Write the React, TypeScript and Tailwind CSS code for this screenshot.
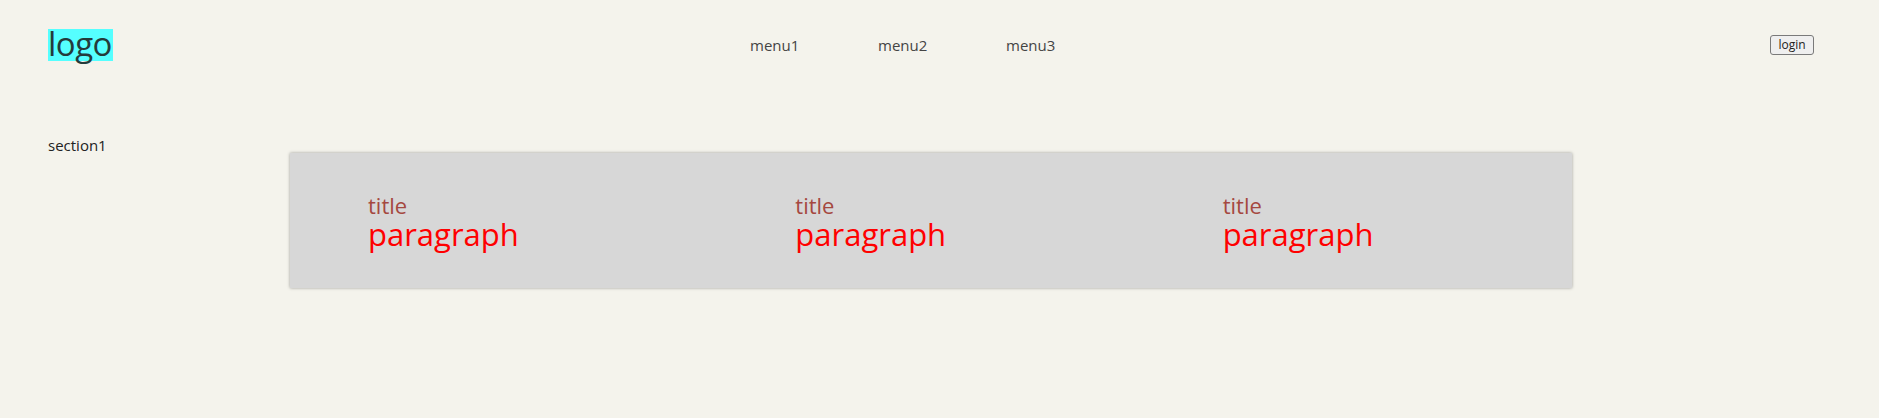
import React from 'react';

const menus = ['menu1', 'menu2', 'menu3'];

const cards = [
  { title: 'title', body: 'paragraph' },
  { title: 'title', body: 'paragraph' },
  { title: 'title', body: 'paragraph' },
];

const App: React.FC = () => {
  return (
    <main className="min-h-screen bg-[#f4f3ec] font-['Open_Sans','Noto_Sans',sans-serif] text-[#333]">
      <header className="flex items-center pt-[29px] pl-[48px] pr-[65px]">
        <div className="h-[32px] w-[65px] bg-[#55ffff] text-[33px] leading-[30px] text-[#243b3b] tracking-[-0.5px]">
          logo
        </div>
        <nav className="ml-[637px] flex">
          {menus.map((m) => (
            <a key={m} className="w-[128px] text-[15px] leading-[20px] text-[#444]">
              {m}
            </a>
          ))}
        </nav>
        <button className="ml-auto h-[20px] w-[44px] rounded-[3px] border border-[#7a7a7a] bg-[#efefef] text-[12px] leading-[16px] text-[#222]">
          login
        </button>
      </header>

      <section className="mt-[74px] flex pl-[48px]">
        <div className="w-[242px] text-[15px] leading-[21px] text-[#222]">section1</div>
        <div className="mt-[18px] grid h-[135px] w-[1282px] grid-cols-3 bg-[#d7d7d7] pt-[41px] shadow-[0_0_3px_rgba(0,0,0,0.35)]">
          {cards.map((c, i) => (
            <div key={i} className="flex flex-col pl-[78px]">
              <h3 className="text-[22px] leading-[22px] text-[#a5483f]">{c.title}</h3>
              <p className="mt-[3px] text-[31px] leading-[30px] text-[#ff0000]">{c.body}</p>
            </div>
          ))}
        </div>
      </section>
    </main>
  );
};

export default App;
